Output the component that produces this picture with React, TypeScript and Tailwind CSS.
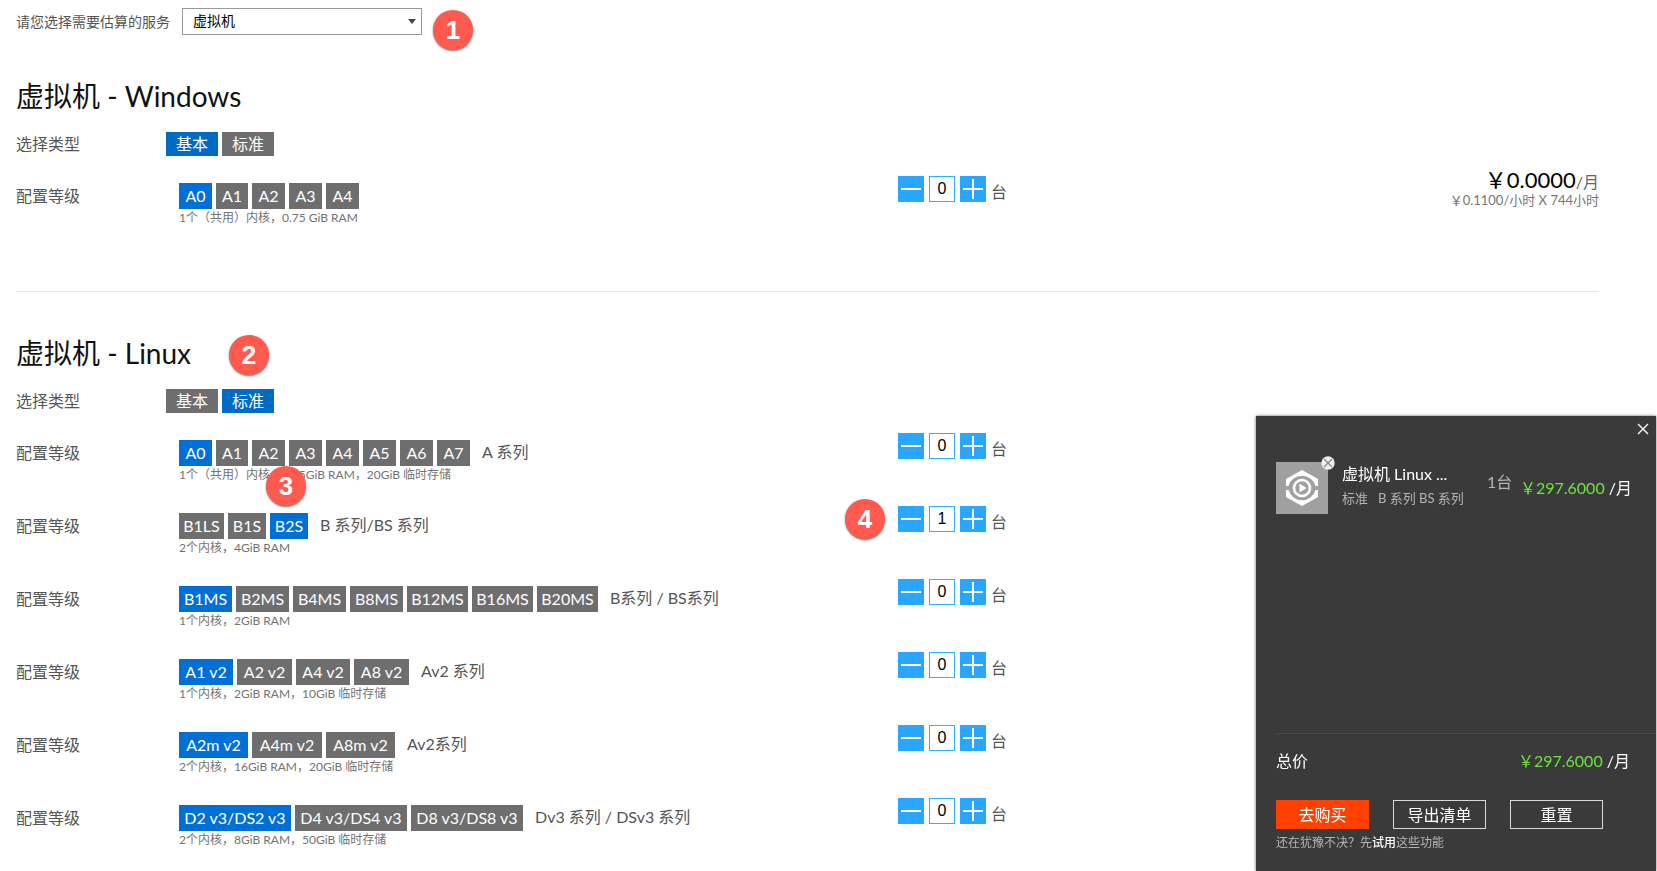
import { useState } from "react";

type Tier = {
  options: string[];
  widths: string[];
  selected: number;
  spec: string;
  series?: string;
  count: number;
  marker?: "spec" | "stepper";
};

const windowsTiers: Tier[] = [
  {
    options: ["A0", "A1", "A2", "A3", "A4"],
    widths: ["w-[33px]", "w-8"],
    selected: 0,
    spec: "1个（共用）内核，0.75 GiB RAM",
    count: 0,
  },
];

const linuxTiers: Tier[] = [
  {
    options: ["A0", "A1", "A2", "A3", "A4", "A5", "A6", "A7"],
    widths: ["w-[33px]", "w-8"],
    selected: 0,
    spec: "1个（共用）内核，0.75GiB RAM，20GiB 临时存储",
    series: "A 系列",
    count: 0,
    marker: "spec",
  },
  {
    options: ["B1LS", "B1S", "B2S"],
    widths: ["w-[45px]", "w-[38px]", "w-[38px]"],
    selected: 2,
    spec: "2个内核，4GiB RAM",
    series: "B 系列/BS 系列",
    count: 1,
    marker: "stepper",
  },
  {
    options: ["B1MS", "B2MS", "B4MS", "B8MS", "B12MS", "B16MS", "B20MS"],
    widths: ["w-[53px]", "w-[53px]", "w-[53px]", "w-[53px]", "w-[61px]", "w-[61px]", "w-[61px]"],
    selected: 0,
    spec: "1个内核，2GiB RAM",
    series: "B系列 / BS系列",
    count: 0,
  },
  {
    options: ["A1 v2", "A2 v2", "A4 v2", "A8 v2"],
    widths: ["w-[54px]", "w-[55px]", "w-[54px]", "w-[55px]"],
    selected: 0,
    spec: "1个内核，2GiB RAM，10GiB 临时存储",
    series: "Av2 系列",
    count: 0,
  },
  {
    options: ["A2m v2", "A4m v2", "A8m v2"],
    widths: ["w-[69px]", "w-[70px]"],
    selected: 0,
    spec: "2个内核，16GiB RAM，20GiB 临时存储",
    series: "Av2系列",
    count: 0,
  },
  {
    options: ["D2 v3/DS2 v3", "D4 v3/DS4 v3", "D8 v3/DS8 v3"],
    widths: ["w-[112px]"],
    selected: 0,
    spec: "2个内核，8GiB RAM，50GiB 临时存储",
    series: "Dv3 系列 / DSv3 系列",
    count: 0,
  },
];

function Marker({ n, className }: { n: number; className: string }) {
  return (
    <span
      className={`absolute z-10 flex size-10 items-center justify-center rounded-full bg-[#ff5a4d] font-['Liberation_Sans',sans-serif] text-[26px] font-bold text-white shadow-[0_1px_2px_rgba(0,0,0,0.55)] ${className}`}
    >
      {n}
    </span>
  );
}

function Stepper({ initial }: { initial: number }) {
  const [value, setValue] = useState(initial);
  return (
    <div className="flex items-start gap-[5px]">
      <button
        aria-label="减少"
        onClick={() => setValue(Math.max(0, value - 1))}
        className="flex size-[26px] items-center justify-center bg-[#2ba6ff]"
      >
        <svg width="20" height="20" viewBox="0 0 20 20" stroke="white" strokeWidth="2">
          <path d="M0 10H20" />
        </svg>
      </button>
      <input
        aria-label="数量"
        value={value}
        onChange={(e) => setValue(Number(e.target.value) || 0)}
        className="size-[26px] border border-[#2bb4f5] bg-white text-center font-['Liberation_Sans',sans-serif] text-base text-black outline-none"
      />
      <button
        aria-label="增加"
        onClick={() => setValue(value + 1)}
        className="flex size-[26px] items-center justify-center bg-[#2ba6ff]"
      >
        <svg width="20" height="20" viewBox="0 0 20 20" stroke="white" strokeWidth="2">
          <path d="M0 10H20M10 0V20" />
        </svg>
      </button>
      <span className="pt-1 text-base leading-6 text-[#555]">台</span>
    </div>
  );
}

function TierRow({ tier, price }: { tier: Tier; price?: boolean }) {
  const [selected, setSelected] = useState(tier.selected);
  return (
    <div className="grid h-[73px] grid-cols-[163px_minmax(0,719fr)_minmax(0,701fr)] items-start">
      <div className="pt-2 text-base leading-6 text-[#555]">配置等级</div>
      <div className="relative pt-[7px]">
        <div className="flex gap-1">
          {tier.options.map((o, i) => (
            <button
              key={o}
              onClick={() => setSelected(i)}
              className={`h-[26px] shrink-0 whitespace-nowrap text-center text-base leading-6 text-white ${
                tier.widths[i] ?? tier.widths[0]
              } ${i === selected ? "bg-[#006fd6]" : "bg-[#6e6e6e]"}`}
            >
              {o}
            </button>
          ))}
          {tier.series && (
            <span className="ml-2 whitespace-nowrap text-base leading-6 text-[#555]">{tier.series}</span>
          )}
        </div>
        <p className="whitespace-nowrap text-xs leading-[18px] text-[#737373]">{tier.spec}</p>
        {tier.marker === "spec" && <Marker n={3} className="left-[87px] top-[33px]" />}
      </div>
      <div className="relative flex items-start justify-between">
        <Stepper initial={tier.count} />
        {price && (
          <div className="-mt-2 text-right">
            <p className="text-base leading-6 text-[#666]">
              <span className="text-[22px] text-black">￥0.0000</span>/月
            </p>
            <p className="text-[13px] leading-3 text-[#777]">￥0.1100/小时 X 744小时</p>
          </div>
        )}
        {tier.marker === "stepper" && <Marker n={4} className="-left-[53px] -top-[7px]" />}
      </div>
    </div>
  );
}

function Section({
  name,
  type,
  tiers,
  price,
  marker,
}: {
  name: string;
  type: number;
  tiers: Tier[];
  price?: boolean;
  marker?: boolean;
}) {
  const [active, setActive] = useState(type);
  return (
    <section className="pt-[41px]">
      <h2 className="relative text-[28px] font-normal leading-10 text-[#111]">
        虚拟机 - {name}
        {marker && <Marker n={2} className="left-[213px] top-0.5" />}
      </h2>
      <div className="mt-4 flex items-center">
        <div className="w-[150px] text-base leading-6 text-[#555]">选择类型</div>
        <div className="flex gap-1">
          {["基本", "标准"].map((t, i) => (
            <button
              key={t}
              onClick={() => setActive(i)}
              className={`h-6 w-[52px] text-base leading-6 text-white ${
                i === active ? "bg-[#006bc6]" : "bg-[#6e6e6e]"
              }`}
            >
              {t}
            </button>
          ))}
        </div>
      </div>
      <div className="mt-5">
        {tiers.map((t) => (
          <TierRow key={t.options.join()} tier={t} price={price} />
        ))}
      </div>
    </section>
  );
}

function Cart() {
  return (
    <aside className="fixed bottom-0 right-px flex h-[455px] w-[400px] flex-col bg-[#3a3a3a] pl-5 text-white shadow-[0_0_3px_rgba(0,0,0,0.6)]">
      <button aria-label="关闭" className="absolute right-1.5 top-1.5 p-px">
        <svg width="12" height="12" viewBox="0 0 12 12" fill="none" stroke="white" strokeWidth="1.4">
          <path d="M1 1l10 10M11 1L1 11" />
        </svg>
      </button>
      <div className="flex flex-1 items-start pt-[46px]">
        <div className="relative mr-[14px] flex size-[52px] shrink-0 items-center justify-center bg-[#a0a0a0]">
          <svg width="34" height="38" viewBox="0 0 34 38" fill="white">
            <path d="M17 1L33 10V17H30.5A14 14 0 0 0 3.5 17H1V10Z" />
            <path d="M17 37L33 28V21H30.5A14 14 0 0 1 3.5 21H1V28Z" />
            <circle cx="17" cy="19" r="8" fill="none" stroke="white" strokeWidth="2.6" />
            <path d="M14.5 14.500L21.500 19L14.500 23.500Z" />
          </svg>
          <button aria-label="移除" className="absolute -right-[7px] -top-[6px]">
            <svg width="14" height="14" viewBox="0 0 14 14">
              <circle cx="7" cy="7" r="6.7" fill="#efefef" />
              <path d="M3 3l8 8M11 3l-8 8" stroke="#888" strokeWidth="1.2" />
            </svg>
          </button>
        </div>
        <div className="w-[145px]">
          <p className="text-base leading-6">虚拟机 Linux ...</p>
          <p className="whitespace-pre text-[13px] leading-6 text-[#b5b5b5]">{"标准   B 系列 BS 系列"}</p>
        </div>
        <span className="pt-2 text-base leading-6 text-[#b5b5b5]">1台</span>
        <p className="ml-auto pr-6 pt-[14px] text-base leading-6">
          <span className="text-[#6be53a]">￥297.6000</span> /月
        </p>
      </div>
      <div className="border-t border-[#484848] pb-[18px] pt-[15px]">
        <div className="flex justify-between pr-[26px] text-base leading-6">
          <span>总价</span>
          <p>
            <span className="text-[#6be53a]">￥297.6000</span> /月
          </p>
        </div>
        <div className="mt-[27px] flex gap-6">
          <button className="h-[29px] w-[93px] bg-[#ff4000] text-base leading-6">去购买</button>
          <button className="h-[29px] w-[93px] border border-[#d8d8d8] text-base leading-6">导出清单</button>
          <button className="h-[29px] w-[93px] border border-[#d8d8d8] text-base leading-6">重置</button>
        </div>
        <p className="mt-1 text-xs leading-5 text-[#b5b5b5]">
          还在犹豫不决？先
          <a href="#trial" className="font-medium text-white">
            试用
          </a>
          这些功能
        </p>
      </div>
    </aside>
  );
}

export default function App() {
  return (
    <div className="min-h-screen bg-white font-['Lato','Noto_Sans_CJK_SC',sans-serif]">
      <main className="pl-4 pr-[58px] pt-2">
        <div className="flex items-center">
          <label htmlFor="service" className="w-[166px] text-sm text-[#555]">
            请您选择需要估算的服务
          </label>
          <div className="relative">
            <select
              id="service"
              className="block h-[27px] w-60 appearance-none border border-[#999] bg-white pb-0.5 pl-[10px] text-sm text-black"
            >
              <option>虚拟机</option>
            </select>
            <svg
              className="pointer-events-none absolute right-[6px] top-[11px]"
              width="8"
              height="5"
              viewBox="0 0 8 5"
              fill="#444"
            >
              <path d="M0 0H8L4 5Z" />
            </svg>
            <Marker n={1} className="left-[251px] top-[2px]" />
          </div>
        </div>
        <Section name="Windows" type={0} tiers={windowsTiers} price />
        <hr className="mt-[42px] border-t border-[#e8e8e8]" />
        <Section name="Linux" type={1} tiers={linuxTiers} marker />
      </main>
      <Cart />
    </div>
  );
}
